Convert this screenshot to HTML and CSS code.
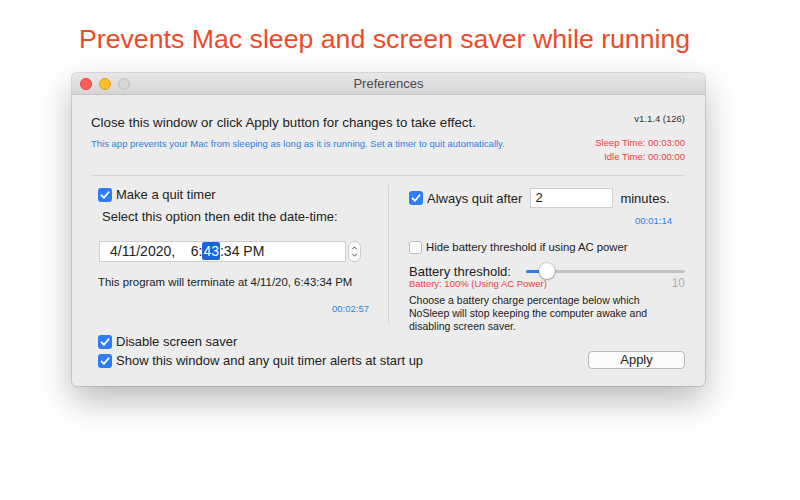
FILE: index.html
```html
<!DOCTYPE html>
<html>
<head>
<meta charset="utf-8">
<link rel="stylesheet" href="styles.css">
</head>
<body>
<h1 class="headline">Prevents Mac sleep and screen saver while running</h1>
<div class="window">
  <div class="titlebar">
    <div class="lights">
      <span class="light red"></span>
      <span class="light yellow"></span>
      <span class="light gray"></span>
    </div>
    <div class="title">Preferences</div>
  </div>
  <div class="content">
    <div class="header">
      <div class="header-left">
        <div class="lead">Close this window or click Apply button for changes to take effect.</div>
        <div class="info">This app prevents your Mac from sleeping as long as it is running. Set a timer to quit automatically.</div>
      </div>
      <div class="header-right">
        <div class="version">v1.1.4 (126)</div>
        <div class="status">Sleep Time: 00:03:00</div>
        <div class="status">Idle Time: 00:00:00</div>
      </div>
    </div>
    <div class="sep"></div>
    <div class="panels">
      <div class="panel-left">
        <label class="check-row big">
          <span class="cb on"><svg viewBox="0 0 14 14"><path d="M3.5 7.3 L6 9.8 L10.6 4.2" /></svg></span>
          <span>Make a quit timer</span>
        </label>
        <div class="hint">Select this option then edit the date-time:</div>
        <div class="date-row">
          <div class="date-field">4/11/2020,&nbsp;&nbsp;&nbsp;&nbsp;6:<span class="sel">43</span>:34 PM</div>
          <div class="stepper">
            <svg viewBox="0 0 12 21"><path d="M3.5 8 L6 5.5 L8.5 8 M3.5 13 L6 15.5 L8.5 13" /></svg>
          </div>
        </div>
        <div class="terminate">This program will terminate at 4/11/20, 6:43:34 PM</div>
        <div class="countdown left-count">00:02:57</div>
      </div>
      <div class="divider"></div>
      <div class="panel-right">
        <div class="quit-row">
          <span class="cb on"><svg viewBox="0 0 14 14"><path d="M3.5 7.3 L6 9.8 L10.6 4.2" /></svg></span>
          <span class="quit-label">Always quit after</span>
          <div class="num-field">2</div>
          <span class="minutes">minutes.</span>
        </div>
        <div class="countdown right-count">00:01:14</div>
        <label class="check-row small">
          <span class="cb off"></span>
          <span>Hide battery threshold if using AC power</span>
        </label>
        <div class="battery-row">
          <span class="battery-label">Battery threshold:</span>
          <div class="slider">
            <div class="track"><div class="fill" style="width:21px"></div></div>
            <div class="knob" style="left:13px"></div>
          </div>
        </div>
        <div class="battery-meta">
          <span class="battery-state">Battery: 100% (Using AC Power)</span>
          <span class="battery-val">10</span>
        </div>
        <div class="desc">Choose a battery charge percentage below which NoSleep will stop keeping the computer awake and disabling screen saver.</div>
      </div>
    </div>
    <div class="footer">
      <div class="footer-checks">
        <label class="check-row big">
          <span class="cb on"><svg viewBox="0 0 14 14"><path d="M3.5 7.3 L6 9.8 L10.6 4.2" /></svg></span>
          <span>Disable screen saver</span>
        </label>
        <label class="check-row big">
          <span class="cb on"><svg viewBox="0 0 14 14"><path d="M3.5 7.3 L6 9.8 L10.6 4.2" /></svg></span>
          <span>Show this window and any quit timer alerts at start up</span>
        </label>
      </div>
      <button class="apply">Apply</button>
    </div>
  </div>
</div>
</body>
</html>
```
FILE: styles.css
```css
html, body {
  margin: 0;
  padding: 0;
  background: #ffffff;
  font-family: "Liberation Sans", Arial, sans-serif;
  color: #262626;
}
body {
  width: 800px;
  height: 500px;
  overflow: hidden;
}
.headline {
  margin: 0;
  padding: 23px 0 0 79px;
  height: 73px;
  box-sizing: border-box;
  font-weight: normal;
  font-size: 26.7px;
  line-height: 32px;
  color: #ec4b2a;
}
.window {
  margin-left: 72px;
  width: 633px;
  height: 313px;
  border-radius: 5px;
  background: #ececec;
  box-shadow: 0 0 0 1px rgba(0,0,0,0.12), 0 14px 34px rgba(0,0,0,0.28);
  overflow: hidden;
}
.titlebar {
  height: 22px;
  box-sizing: border-box;
  background: linear-gradient(#e9e7e9, #d6d4d6);
  border-bottom: 1px solid #c4c2c4;
  display: flex;
  align-items: center;
  position: relative;
}
.lights {
  display: flex;
  gap: 7px;
  padding-left: 8px;
}
.light {
  width: 12px;
  height: 12px;
  border-radius: 50%;
  box-sizing: border-box;
}
.light.red { background: #fc5f57; border: 1px solid #e0443e; }
.light.yellow { background: #fdbc2e; border: 1px solid #dea123; }
.light.gray { background: #d7d5d7; border: 1px solid #c2c0c2; }
.title {
  position: absolute;
  left: 0;
  right: 0;
  top: 0;
  line-height: 22px;
  text-align: center;
  font-size: 13px;
  color: #4a4a4a;
}
.content {
  padding: 0 20px 0 19px;
}
.header {
  display: flex;
  justify-content: space-between;
  height: 80px;
}
.header-left {
  padding-top: 19px;
}
.lead {
  font-size: 13.3px;
  line-height: 18px;
  color: #222;
}
.info {
  margin-top: 6px;
  font-size: 9.5px;
  line-height: 12px;
  color: #2f7fe6;
}
.header-right {
  padding-top: 17px;
  text-align: right;
  font-size: 9.5px;
  line-height: 14px;
}
.version {
  color: #333;
  margin-bottom: 10px;
}
.status {
  color: #e8433e;
}
.sep {
  height: 1px;
  background: #d6d6d6;
}
.panels {
  display: flex;
  height: 148px;
}
.panel-left {
  width: 297px;
  padding-top: 10px;
  box-sizing: border-box;
}
.divider {
  width: 1px;
  background: #d6d6d6;
  margin-top: 9px;
  margin-bottom: 0;
}
.panel-right {
  flex: 1;
  padding-left: 20px;
  padding-top: 10px;
}
.cb {
  width: 14px;
  height: 14px;
  border-radius: 3px;
  box-sizing: border-box;
  flex: none;
  display: inline-block;
}
.cb.on {
  background: #2e7cf6;
}
.cb.on svg {
  width: 14px;
  height: 14px;
  display: block;
  fill: none;
  stroke: #fff;
  stroke-width: 1.8;
  stroke-linecap: round;
  stroke-linejoin: round;
}
.cb.off {
  width: 13px;
  height: 13px;
  background: #fff;
  border: 1px solid #bdbdbd;
}
.check-row {
  display: flex;
  align-items: center;
  gap: 4px;
}
.check-row.big {
  font-size: 13px;
  line-height: 18px;
  margin-left: 7px;
  color: #222;
}
.hint {
  margin: 4px 0 0 11px;
  font-size: 13px;
  line-height: 18px;
  color: #222;
}
.date-row {
  display: flex;
  align-items: center;
  margin: 15px 0 0 8px;
  gap: 2px;
}
.date-field {
  width: 247px;
  height: 21px;
  box-sizing: border-box;
  background: #fff;
  border: 1px solid #cfcfcf;
  font-size: 14px;
  line-height: 19px;
  padding-left: 10px;
  color: #222;
}
.sel {
  background: #1a66d9;
  color: #fff;
  border-radius: 2px;
  padding: 1px 1px;
}
.stepper {
  width: 13px;
  height: 21px;
  box-sizing: border-box;
  border: 1px solid #cdcdcd;
  border-radius: 6px;
  background: #fafafa;
}
.stepper svg {
  width: 11px;
  height: 19px;
  display: block;
  fill: none;
  stroke: #444;
  stroke-width: 1.1;
}
.terminate {
  margin: 13px 0 0 7px;
  font-size: 11.4px;
  line-height: 14px;
  color: #222;
}
.countdown {
  font-size: 9.5px;
  line-height: 12px;
  color: #2f7fe6;
  text-align: right;
}
.left-count {
  margin-top: 14px;
  padding-right: 19px;
}
.quit-row {
  display: flex;
  align-items: center;
  font-size: 13px;
  color: #222;
  height: 20px;
  margin-top: 2px;
}
.quit-label {
  margin-left: 4px;
}
.num-field {
  width: 83px;
  height: 20px;
  box-sizing: border-box;
  background: #fff;
  border: 1px solid #cfcfcf;
  margin-left: 8px;
  padding-left: 4px;
  line-height: 18px;
}
.minutes {
  margin-left: 7px;
}
.right-count {
  margin-top: 7px;
  padding-right: 13px;
}
.check-row.small {
  font-size: 11.3px;
  line-height: 14px;
  margin-top: 13px;
  gap: 4px;
  color: #222;
}
.battery-row {
  display: flex;
  align-items: center;
  margin-top: 9px;
  height: 16px;
}
.battery-label {
  font-size: 13px;
  color: #222;
  width: 117px;
}
.slider {
  position: relative;
  flex: 1;
  height: 16px;
}
.track {
  position: absolute;
  left: 0;
  right: 0;
  top: 7px;
  height: 3px;
  border-radius: 2px;
  background: #c4c4c4;
}
.fill {
  height: 3px;
  border-radius: 2px;
  background: #2e7cf6;
}
.knob {
  position: absolute;
  top: 0;
  width: 16px;
  height: 16px;
  border-radius: 50%;
  background: #fff;
  box-shadow: 0 0 0 0.5px rgba(0,0,0,0.25), 0 1px 2px rgba(0,0,0,0.3);
}
.battery-meta {
  display: flex;
  justify-content: space-between;
  align-items: flex-end;
  margin-top: -3px;
}
.battery-state {
  font-size: 9.5px;
  line-height: 12px;
  color: #e8433e;
}
.battery-val {
  font-size: 12px;
  line-height: 14px;
  color: #b0b0b0;
}
.desc {
  margin-top: 4px;
  font-size: 10.5px;
  line-height: 13px;
  color: #222;
  width: 260px;
}
.footer {
  display: flex;
  justify-content: space-between;
  align-items: flex-end;
  margin-top: 9px;
}
.footer-checks {
  display: flex;
  flex-direction: column;
  gap: 1px;
}
.apply {
  width: 97px;
  height: 18px;
  margin-bottom: 1px;
  box-sizing: border-box;
  border: 1px solid #b9b9b9;
  border-radius: 4px;
  background: #fbfbfb;
  font-family: "Liberation Sans", Arial, sans-serif;
  font-size: 13px;
  line-height: 16px;
  color: #222;
  padding: 0;
}
```
